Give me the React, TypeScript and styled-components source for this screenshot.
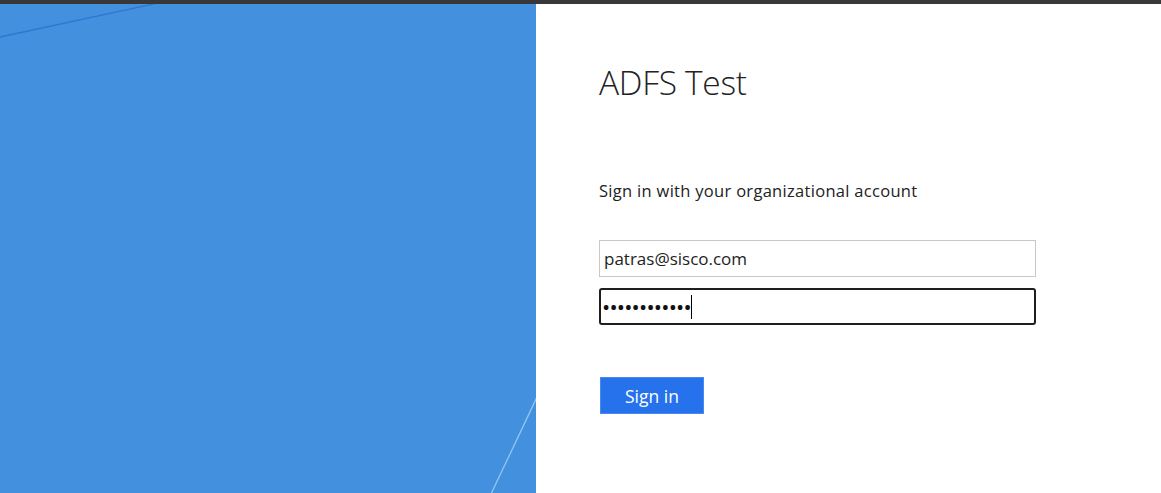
import React from "react";
import styled, { createGlobalStyle } from "styled-components";

const Global = createGlobalStyle`
  html, body { margin: 0; padding: 0; background: #fff; }
  body { font-family: "Open Sans", "Noto Sans", sans-serif; overflow: hidden; }
`;

const Page = styled.div`
  width: 1161px;
  height: 493px;
  display: flex;
  flex-direction: column;
  overflow: hidden;
`;

const TopBar = styled.div`
  height: 4px;
  flex: 0 0 4px;
  background: #38383b;
`;

const Main = styled.div`
  flex: 1;
  display: flex;
`;

const Illustration = styled.div`
  position: relative;
  width: 536px;
  flex: 0 0 536px;
  background: #4290de;
  overflow: hidden;
`;

const Decor = styled.svg`
  position: absolute;
  inset: 0;
  width: 100%;
  height: 100%;
`;

const Content = styled.div`
  flex: 1;
  padding: 0 0 0 63px;
  display: flex;
  flex-direction: column;
`;

const Title = styled.h1`
  margin: 56px 0 0 0;
  font-family: "Open Sans", "Noto Sans", sans-serif;
  font-weight: 300;
  font-size: 33.5px;
  line-height: 44px;
  color: #222;
  letter-spacing: -0.3px;
`;

const Intro = styled.p`
  margin: 77px 0 0 0;
  font-size: 16.5px;
  line-height: 20px;
  color: #222;
  letter-spacing: 0.3px;
`;

const Form = styled.form`
  margin-top: 39px;
  display: flex;
  flex-direction: column;
  gap: 11px;
  width: 437px;
`;

const Field = styled.div<{ $focused?: boolean }>`
  box-sizing: border-box;
  height: 37px;
  border: ${p => (p.$focused ? "2px solid #1f1f1f" : "1px solid #c8c8c8")};
  border-radius: ${p => (p.$focused ? "3px" : "0")};
  display: flex;
  align-items: center;
  padding-left: ${p => (p.$focused ? 2 : 4)}px;
  font-size: 17px;
  color: #222;
`;

const Dots = styled.span`
  font-size: 16.5px;
  letter-spacing: 1.2px;
  font-weight: 700;
  color: #111;
`;

const Caret = styled.span`
  display: inline-block;
  width: 1px;
  height: 24px;
  background: #000;
  margin-left: -1px;
`;

const SubmitButton = styled.button`
  margin-top: 52px;
  margin-left: 1px;
  width: 104px;
  height: 37px;
  box-sizing: border-box;
  background: #2672ec;
  border: 1px solid #4a8af0;
  color: #fff;
  font-family: "Open Sans", "Noto Sans", sans-serif;
  font-size: 17.5px;
  padding: 0;
  cursor: pointer;
`;

export default function App() {
  return (
    <>
      <Global />
      <Page>
        <TopBar />
        <Main>
          <Illustration>
            <Decor viewBox="0 0 536 489" preserveAspectRatio="none">
              <line x1="0" y1="33" x2="158" y2="-1" stroke="#2f77cf" strokeWidth="1.3" />
              <line x1="537" y1="393" x2="491" y2="490" stroke="#93c6f0" strokeWidth="1.3" />
            </Decor>
          </Illustration>
          <Content>
            <Title>ADFS Test</Title>
            <Intro>Sign in with your organizational account</Intro>
            <Form onSubmit={e => e.preventDefault()}>
              <Field>patras@sisco.com</Field>
              <Field $focused>
                <Dots>••••••••••••</Dots>
                <Caret />
              </Field>
            </Form>
            <SubmitButton type="button">Sign in</SubmitButton>
          </Content>
        </Main>
      </Page>
    </>
  );
}
